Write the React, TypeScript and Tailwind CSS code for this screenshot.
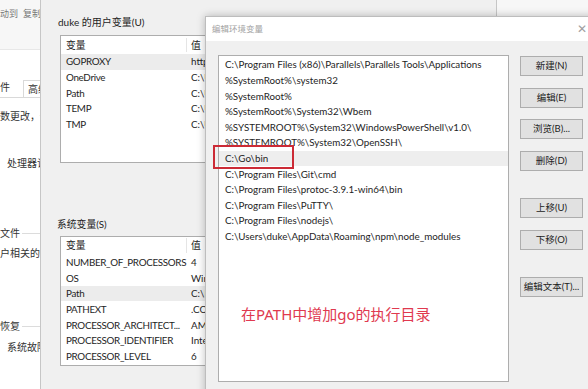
import React, { type JSX } from "react";

// only the part of each value left of the edit dialog is visible
const userVars: [string, string][] = [
  ["GOPROXY", "http"],
  ["OneDrive", "C:\\U"],
  ["Path", "C:\\U"],
  ["TEMP", "C:\\U"],
  ["TMP", "C:\\U"],
];

const sysVars: [string, string][] = [
  ["NUMBER_OF_PROCESSORS", "4"],
  ["OS", "Win"],
  ["Path", "C:\\P"],
  ["PATHEXT", ".CO"],
  ["PROCESSOR_ARCHITECT...", "AM"],
  ["PROCESSOR_IDENTIFIER", "Inte"],
  ["PROCESSOR_LEVEL", "6"],
];

const paths = [
  "C:\\Program Files (x86)\\Parallels\\Parallels Tools\\Applications",
  "%SystemRoot%\\system32",
  "%SystemRoot%",
  "%SystemRoot%\\System32\\Wbem",
  "%SYSTEMROOT%\\System32\\WindowsPowerShell\\v1.0\\",
  "%SYSTEMROOT%\\System32\\OpenSSH\\",
  "C:\\Go\\bin",
  "C:\\Program Files\\Git\\cmd",
  "C:\\Program Files\\protoc-3.9.1-win64\\bin",
  "C:\\Program Files\\PuTTY\\",
  "C:\\Program Files\\nodejs\\",
  "C:\\Users\\duke\\AppData\\Roaming\\npm\\node_modules",
];

function VarList({ rows, selected, height }: { rows: [string, string][]; selected: number; height: string }) {
  return (
    <div className={`ml-[19px] w-[148px] ${height} overflow-hidden border-y border-l border-[#adadad] bg-white`}>
      <div className="flex h-[18px] items-center">
        <div className="w-[126px] shrink-0 border-r border-[#e5e5e5] pl-[5px]">变量</div>
        <div className="pl-[4px]">值</div>
      </div>
      {rows.map(([k, v], i) => (
        <div key={k} className={`flex h-[15.6px] items-center ${i === selected ? "bg-[#ececec]" : ""}`}>
          <div className="w-[126px] shrink-0 whitespace-nowrap pl-[5px] tracking-[-0.3px]">{k}</div>
          <div className="min-w-0 overflow-hidden whitespace-nowrap pl-[4px]">{v}</div>
        </div>
      ))}
    </div>
  );
}

function Btn({ label, mt }: { label: string; mt: string }) {
  return (
    <button className={`${mt} h-[20px] w-[63px] whitespace-nowrap border border-[#adadad] bg-[#e1e1e1] px-0 text-[9.5px] text-[#222]`}>
      {label}
    </button>
  );
}

export default function App(): JSX.Element {
  return (
    <div className="relative h-[389px] w-[588px] overflow-hidden bg-[#f7f7f7] font-['Lato','Noto_Sans_CJK_SC',sans-serif] text-[9.8px] text-[#1e1e1e]">
      {/* 系统属性 (back window) */}
      <div className="absolute left-0 top-0 flex h-full w-[60px] flex-col bg-white text-[10px] text-[#333]">
        <div className="flex h-[50px] gap-[5px] border-b border-[#e8e8e8] bg-[#f7f7f7] pt-[7px] text-[9px] text-[#777]">
          <span className="whitespace-nowrap">动到</span>
          <span className="whitespace-nowrap">复制到</span>
        </div>
        <div className="mt-[31px] flex h-[17px] items-end border-b border-[#d9d9d9]">
          <span className="pb-[2px]">件</span>
          <span className="ml-[13px] h-[17px] whitespace-nowrap border-x border-t border-[#d9d9d9] bg-white px-[4px] pt-[1px]">高级</span>
        </div>
        <div className="mt-[11px] whitespace-nowrap">数更改，你</div>
        <div className="ml-[7px] mt-[32px] whitespace-nowrap">处理器计</div>
        <div className="mt-[55px] flex items-center gap-[2px]">
          <span className="whitespace-nowrap">文件</span>
          <span className="h-px flex-1 bg-[#dcdcdc]" />
        </div>
        <div className="mt-[5px] whitespace-nowrap">户相关的桌</div>
        <div className="mt-[58px] flex items-center gap-[2px]">
          <span className="whitespace-nowrap">恢复</span>
          <span className="h-px flex-1 bg-[#dcdcdc]" />
        </div>
        <div className="ml-[7px] mt-[6px] whitespace-nowrap">系统故障</div>
      </div>

      {/* 环境变量 window */}
      <div className="absolute left-[40px] top-0 flex h-full w-[457px] flex-col border-x border-[#c6c6c6] bg-[#f0f0f0]">
        <div className="ml-[17px] mt-[15px] text-[10px]">duke 的用户变量(U)</div>
        <div className="mt-[5px]">
          <VarList rows={userVars} selected={0} height="h-[128px]" />
        </div>
        <div className="ml-[16px] mt-[54px] text-[9.8px]">系统变量(S)</div>
        <div className="mt-[4px]">
          <VarList rows={sysVars} selected={2} height="h-[130px]" />
        </div>
      </div>

      {/* 编辑环境变量 dialog */}
      <div className="absolute left-[205px] top-[16px] h-[400px] w-[400px] border border-[#bdbdbd] bg-[#f0f0f0] shadow-[0_0_8px_rgba(0,0,0,0.25)]">
        <div className="flex h-[24px] w-[383px] items-center justify-between bg-white pl-[6px] pr-[2px] text-[8.5px] text-[#a3a3a3]">
          <span>编辑环境变量</span>
          <span className="text-[12px] text-[#a0a0a0]">✕</span>
        </div>
        <div className="flex pl-[12px] pt-[14px]">
          <div className="relative h-[327px] w-[291px] shrink-0 border border-[#adadad] bg-white pt-px">
            {paths.map((p, i) => (
              <div
                key={p}
                className={`flex h-[15.6px] items-center whitespace-nowrap pl-[6px] ${i === 6 ? "bg-[#eeeeee]" : ""}`}
              >
                {p}
              </div>
            ))}
            <div className="absolute left-[-6px] top-[89px] h-[24px] w-[81px] border-2 border-[#cc2b36]" />
            <div className="absolute left-[22px] top-[247px] whitespace-nowrap font-['Noto_Sans','Noto_Sans_CJK_SC',sans-serif] text-[15px] text-[#e0394f]">
              在PATH中增加go的执行目录
            </div>
          </div>
          <div className="ml-[11px] flex flex-col pt-px">
            <Btn label="新建(N)" mt="mt-0" />
            <Btn label="编辑(E)" mt="mt-[12px]" />
            <Btn label="浏览(B)..." mt="mt-[11px]" />
            <Btn label="删除(D)" mt="mt-[12px]" />
            <Btn label="上移(U)" mt="mt-[27px]" />
            <Btn label="下移(O)" mt="mt-[12px]" />
            <Btn label="编辑文本(T)..." mt="mt-[27px]" />
          </div>
        </div>
      </div>
    </div>
  );
}
